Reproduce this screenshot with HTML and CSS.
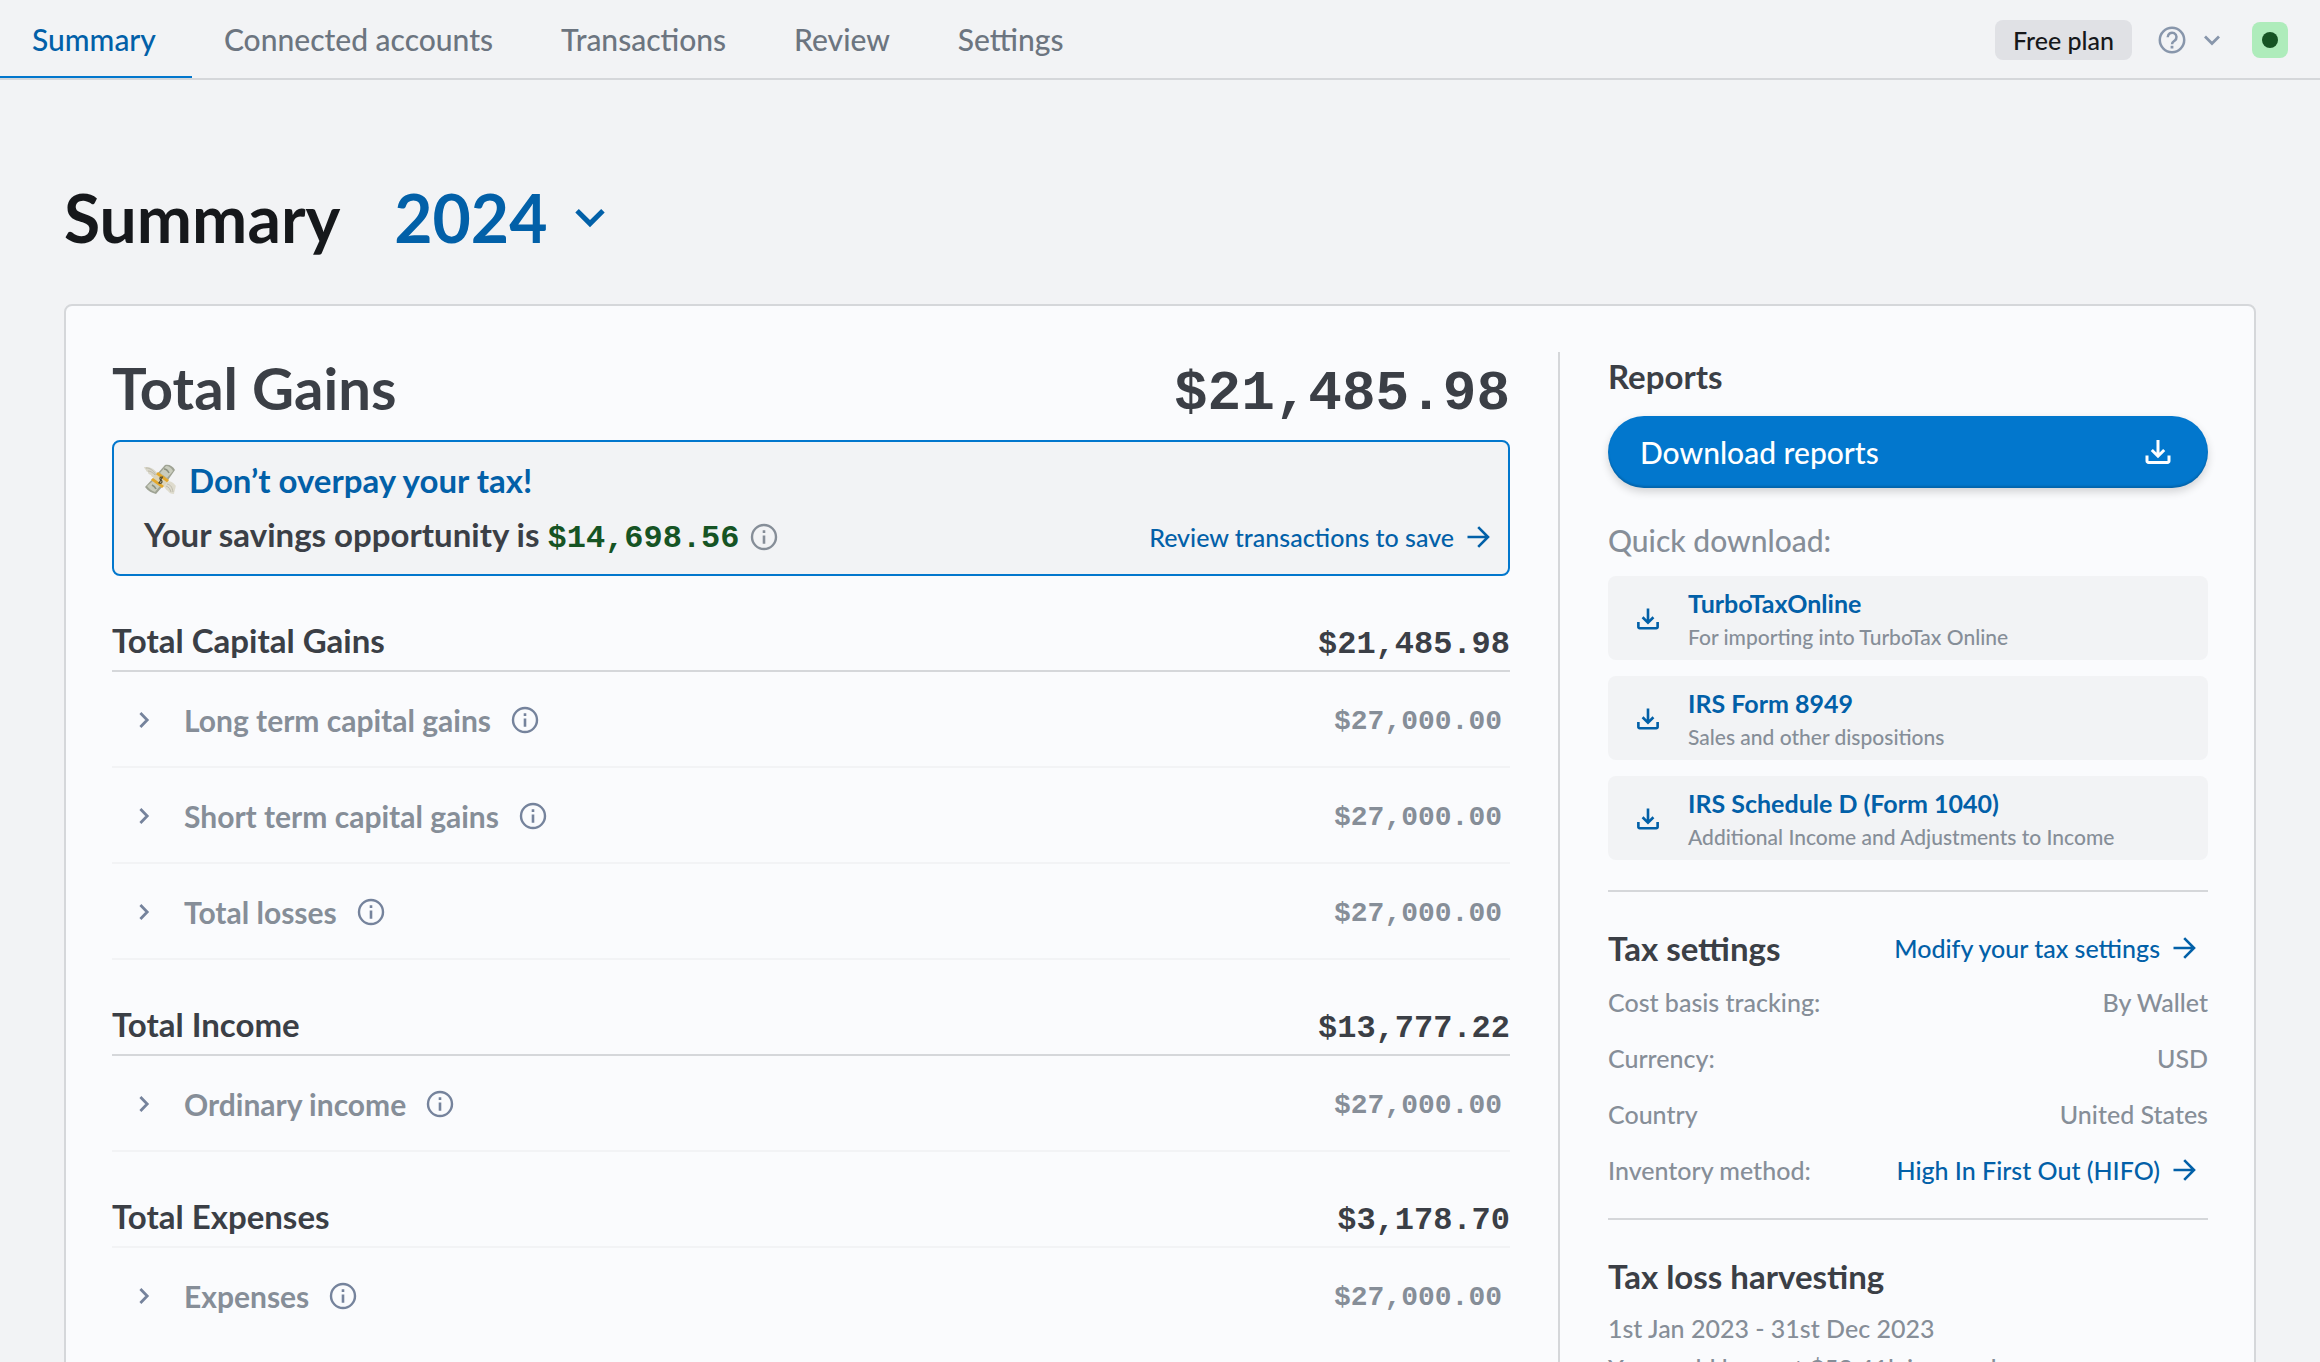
FILE: index.html
```html
<!DOCTYPE html>
<html lang="en">
<head>
<meta charset="utf-8">
<meta name="viewport" content="width=device-width, initial-scale=1">
<title>Summary</title>
<link rel="stylesheet" href="styles.css">
</head>
<body>
<svg class="sprite" aria-hidden="true">
  <symbol id="info" viewBox="0 0 32 32"><circle cx="16" cy="16" r="12" fill="none" stroke="currentColor" stroke-width="2.4"/><path d="M14.7 9.3h2.6v2.7h-2.6zM14.7 14.6h2.6v8.1h-2.6z" fill="currentColor"/></symbol>
  <symbol id="chevron-right" viewBox="0 0 32 32"><path d="M12.4 9l6.8 7-6.8 7" fill="none" stroke="currentColor" stroke-width="2.8"/></symbol>
  <symbol id="arrow" viewBox="0 0 32 32"><path d="M5.5 16h20M16.2 6.2l9.8 9.8-9.8 9.8" fill="none" stroke="currentColor" stroke-width="2.6"/></symbol>
  <symbol id="download" viewBox="0 0 32 32"><path d="M16 4v16M9.800 14l6.200 6.200 6.200-6.200" fill="none" stroke="currentColor" stroke-width="3"/><path d="M5 19.500v5.500a1.500 1.500 0 0 0 1.500 1.500h19a1.500 1.500 0 0 0 1.500-1.500v-5.500" fill="none" stroke="currentColor" stroke-width="3"/></symbol>
</svg>
<div class="app">
  <header class="topbar">
    <nav class="tabs" aria-label="Main">
      <a class="tab tab-active" href="#summary" aria-current="page">Summary</a>
      <a class="tab" href="#accounts">Connected accounts</a>
      <a class="tab" href="#transactions">Transactions</a>
      <a class="tab" href="#review">Review</a>
      <a class="tab" href="#settings">Settings</a>
    </nav>
    <div class="tools">
      <button class="plan" type="button">Free plan</button>
      <button class="help" type="button" aria-label="Help">
        <svg class="icon" viewBox="0 0 32 32"><circle cx="16" cy="16" r="12.2" fill="none" stroke="currentColor" stroke-width="2.5"/><path d="M11.7 13.2a4.4 4.4 0 1 1 6.9 3.5c-1.6 1.1-2.6 1.7-2.6 3.6" fill="none" stroke="currentColor" stroke-width="2.5"/><path d="M14.6 21.8h2.8v2.7h-2.8z" fill="currentColor"/></svg>
        <svg class="icon" viewBox="0 0 32 32"><path d="M9 12.6l7 7 7-7" fill="none" stroke="currentColor" stroke-width="2.8"/></svg>
      </button>
      <button class="status" type="button" aria-label="Account status"><span class="status-dot"></span></button>
    </div>
  </header>

  <main class="page">
    <div class="page-head">
      <h1 class="page-title">Summary</h1>
      <div class="year">
        <select class="year-select" aria-label="Tax year"><option>2024</option><option>2023</option></select>
        <svg class="year-chevron" viewBox="0 0 32 32"><path d="M4.500 9.500L16 21l11.500-11.500" fill="none" stroke="currentColor" stroke-width="4.4"/></svg>
      </div>
    </div>

    <div class="card">
      <div class="gains">
        <div class="gains-head">
          <h2 class="gains-title">Total Gains</h2>
          <span class="money gains-total">$21,485.98</span>
        </div>

        <section class="notice">
          <h3 class="notice-title">
            <svg class="cash" viewBox="0 0 32 32" aria-hidden="true">
              <path d="M14 10C9 3 5 3 0 3c1 2 1 2 2 3 0 1 1 2 2 2 0 2 1 2 3 3 0 2 3 3 5 2z" fill="#d9d6c8"/>
              <path d="M2 4c4 0 7 2 10 7M4 7c3 0 5 2 7 4" fill="none" stroke="#b5b3a5" stroke-width=".8"/>
              <path d="M21 17c6 0 8 1 11 5-1 1 0 2-1 3 0 2-1 3-1 5-3 0-5-1-6-3-2-1-4-4-5-7z" fill="#dedbcd"/>
              <path d="M23 20c4 1 5 3 6 8M22 22c3 1 4 3 5 6" fill="none" stroke="#b5b3a5" stroke-width=".8"/>
              <path d="M14 9L21 1c4-1 8 1 10 5L24 16 12 30C8 29 4 27 1 23z" fill="#9fa394"/>
              <path d="M16 9l6-7c3 0 6 2 7 5l-6 7zM9 17l7 5-5 6c-3-1-6-3-8-6z" fill="#c9ccbd"/>
              <path d="M20 5c2 0 4 2 5 4M8 21c2 1 3 2 4 4" fill="none" stroke="#8b907f" stroke-width="1.600"/>
              <path d="M14 8l11 8-7 8-11-8z" fill="#ddd4b8"/>
              <path d="M14 8l11 8-2 2.200-11-8zM9 14l11 8-2 2-11-8z" fill="#e3a82b"/>
              <path d="M18.500 13.500c-1.500-1-3 0-2.500 1.500s2.500 1 2 3-2.500 1.500-3.500.5M18.800 12.500l-4 7" fill="none" stroke="#4e4a32" stroke-width="1.200"/>
            </svg>
            Don’t overpay your tax!
          </h3>
          <div class="notice-line">
            <p class="notice-text">Your savings opportunity is <span class="money savings">$14,698.56</span></p>
            <button class="info info-soft" type="button" aria-label="About savings"><svg class="icon"><use href="#info"/></svg></button>
            <a class="link notice-link" href="#review">Review transactions to save<svg class="icon"><use href="#arrow"/></svg></a>
          </div>
        </section>

        <section>
          <div class="group-head"><h3 class="heading">Total Capital Gains</h3><span class="money">$21,485.98</span></div>
          <div class="row"><button class="expand" type="button"><svg class="icon"><use href="#chevron-right"/></svg>Long term capital gains</button><button class="info" type="button" aria-label="About long term capital gains"><svg class="icon"><use href="#info"/></svg></button><span class="money row-money">$27,000.00</span></div>
          <div class="row"><button class="expand" type="button"><svg class="icon"><use href="#chevron-right"/></svg>Short term capital gains</button><button class="info" type="button" aria-label="About short term capital gains"><svg class="icon"><use href="#info"/></svg></button><span class="money row-money">$27,000.00</span></div>
          <div class="row"><button class="expand" type="button"><svg class="icon"><use href="#chevron-right"/></svg>Total losses</button><button class="info" type="button" aria-label="About total losses"><svg class="icon"><use href="#info"/></svg></button><span class="money row-money">$27,000.00</span></div>
        </section>
        <section>
          <div class="group-head"><h3 class="heading">Total Income</h3><span class="money">$13,777.22</span></div>
          <div class="row"><button class="expand" type="button"><svg class="icon"><use href="#chevron-right"/></svg>Ordinary income</button><button class="info" type="button" aria-label="About ordinary income"><svg class="icon"><use href="#info"/></svg></button><span class="money row-money">$27,000.00</span></div>
        </section>
        <section>
          <div class="group-head group-head-light"><h3 class="heading">Total Expenses</h3><span class="money">$3,178.70</span></div>
          <div class="row row-last"><button class="expand" type="button"><svg class="icon"><use href="#chevron-right"/></svg>Expenses</button><button class="info" type="button" aria-label="About expenses"><svg class="icon"><use href="#info"/></svg></button><span class="money row-money">$27,000.00</span></div>
        </section>
      </div>

      <aside class="side">
        <section class="side-section">
          <h2 class="heading reports-title">Reports</h2>
          <button class="download-all" type="button">Download reports<svg class="icon"><use href="#download"/></svg></button>
          <h3 class="quick-title">Quick download:</h3>
          <div class="files">
            <a class="file" href="#turbotax"><svg class="file-icon"><use href="#download"/></svg><span class="file-text"><span class="file-name">TurboTaxOnline</span><span class="file-note">For importing into TurboTax Online</span></span></a>
            <a class="file" href="#form-8949"><svg class="file-icon"><use href="#download"/></svg><span class="file-text"><span class="file-name">IRS Form 8949</span><span class="file-note">Sales and other dispositions</span></span></a>
            <a class="file" href="#schedule-d"><svg class="file-icon"><use href="#download"/></svg><span class="file-text"><span class="file-name">IRS Schedule D (Form 1040)</span><span class="file-note">Additional Income and Adjustments to Income</span></span></a>
          </div>
        </section>
        <section class="side-section tax">
          <div class="tax-head"><h2 class="heading">Tax settings</h2><a class="link" href="#settings">Modify your tax settings<svg class="icon"><use href="#arrow"/></svg></a></div>
          <dl class="facts">
            <div class="fact"><dt>Cost basis tracking:</dt><dd>By Wallet</dd></div>
            <div class="fact"><dt>Currency:</dt><dd>USD</dd></div>
            <div class="fact"><dt>Country</dt><dd>United States</dd></div>
            <div class="fact"><dt>Inventory method:</dt><dd><a class="link" href="#inventory">High In First Out (HIFO)<svg class="icon"><use href="#arrow"/></svg></a></dd></div>
          </dl>
        </section>
        <section class="harvest">
          <h2 class="heading">Tax loss harvesting</h2>
          <p class="harvest-text">1st Jan 2023 - 31st Dec 2023<br>You could harvest $58.41k in saved</p>
        </section>
      </aside>
    </div>
  </main>
</div>
</body>
</html>
```
FILE: styles.css
```css
:root {
  --blue: #0277cd;
  --link: #0260a8;
  --ink: #3b3f46;
  --muted: #868e98;
  --slate: #75839c;
  --line: #d5d7da;
  --soft: #f2f3f5;
}

* { box-sizing: border-box; }

body {
  margin: 0;
  background: var(--soft);
  color: var(--ink);
  font: 500 25px/32px Lato, sans-serif;
}

h1, h2, h3, p, dl, dd { margin: 0; }

button, select {
  margin: 0;
  padding: 0;
  border: 0;
  background: none;
  color: inherit;
  font: inherit;
}

a { text-decoration: none; }

.sprite { display: none; }
.icon { display: block; flex: none; width: 32px; height: 32px; }

.app { display: flex; flex-direction: column; height: 100vh; }

/* Top bar */
.topbar {
  display: flex;
  flex: none;
  justify-content: space-between;
  height: 80px;
  border-bottom: 2px solid var(--line);
}
.tabs { display: flex; }
.tab {
  display: flex;
  align-items: center;
  padding: 2px 36px 0 32px;
  border-bottom: 2px solid transparent;
  color: #6c7580;
  font-size: 30px;
}
.tab-active { border-color: var(--blue); color: var(--link); }
.tools { display: flex; align-items: center; gap: 24px; padding: 2px 32px 0 0; }
.plan {
  height: 40px;
  padding: 0 18px;
  border-radius: 8px;
  background: #e0e1e5;
  color: #16181b;
}
.help { display: flex; gap: 8px; color: #8896ab; }
.status {
  display: grid;
  place-items: center;
  width: 36px;
  height: 36px;
  border-radius: 8px;
  background: #aeecbb;
}
.status-dot { width: 16px; height: 16px; border-radius: 50%; background: #165424; }

/* Page */
.page { flex: 1; min-height: 0; padding: 98px 64px 0; overflow-y: auto; scrollbar-width: none; }
.page-head { display: flex; gap: 54px; margin-bottom: 46px; }
.page-title { color: #16181b; font-size: 66px; font-weight: 700; line-height: 80px; }
.year { display: grid; align-items: center; color: var(--link); }
.year-select {
  grid-area: 1 / 1;
  height: 80px;
  padding-right: 60px;
  appearance: none;
  font-size: 66px;
  font-weight: 700;
  line-height: 80px;
}
.year-chevron { grid-area: 1 / 1; justify-self: end; width: 36px; height: 36px; pointer-events: none; }

.card {
  display: grid;
  grid-template-columns: minmax(0, 1fr) 650px;
  gap: 48px;
  padding: 46px;
  border: 2px solid var(--line);
  border-radius: 8px;
  background: #fafbfd;
}

.heading { font-size: 33px; font-weight: 700; line-height: 40px; }
.money { font-family: "Liberation Mono", monospace; font-size: 32px; font-weight: 700; line-height: 40px; }
.link { display: inline-flex; align-items: center; gap: 8px; color: var(--link); }

/* Gains column */
.gains-head { display: flex; justify-content: space-between; height: 88px; }
.gains-title { font-size: 58px; font-weight: 700; line-height: 72px; }
.gains-total { font-size: 56px; line-height: 84px; }

.notice {
  height: 136px;
  padding: 18px 14px 0 30px;
  border: 2px solid var(--blue);
  border-radius: 8px;
  background: var(--soft);
}
.notice-title {
  display: flex;
  align-items: center;
  gap: 13px;
  margin-bottom: 14px;
  color: var(--link);
  font-size: 33px;
  font-weight: 700;
  line-height: 40px;
}
.cash { width: 32px; height: 32px; }
.notice-line { display: flex; align-items: center; gap: 8px; }
.notice-text { font-size: 33px; font-weight: 700; line-height: 40px; }
.savings { color: #165424; }
.notice-link { margin-left: auto; }

.info { color: var(--slate); }
.info-soft { color: var(--muted); }

.group-head {
  display: flex;
  align-items: baseline;
  justify-content: space-between;
  height: 96px;
  padding-top: 44px;
  border-bottom: 2px solid var(--line);
}
.group-head-light { border-color: var(--soft); }
.row {
  display: flex;
  align-items: center;
  gap: 18px;
  height: 96px;
  padding: 2px 8px 0 16px;
  border-bottom: 2px solid var(--soft);
}
.row-last { border-color: transparent; }
.expand { display: flex; align-items: center; gap: 24px; color: var(--muted); font-size: 30px; font-weight: 700; }
.expand .icon { color: var(--slate); }
.row-money { margin-left: auto; padding-top: 4px; color: var(--muted); font-size: 28px; }

/* Sidebar */
.side { padding-left: 48px; border-left: 2px solid var(--line); }
.side-section { border-bottom: 2px solid var(--line); padding-bottom: 30px; }
.reports-title { padding-top: 4px; margin-bottom: 20px; }
.download-all {
  display: flex;
  align-items: center;
  justify-content: space-between;
  width: 100%;
  height: 72px;
  padding: 0 34px 0 32px;
  border-radius: 36px;
  background: var(--blue);
  box-shadow: 0 4px 8px rgba(0, 0, 0, .16), inset 0 -2px 2px rgba(0, 0, 0, .16);
  color: #fff;
  font-size: 30px;
}
.quick-title { margin: 32px 0 16px; color: var(--muted); font-size: 30px; font-weight: 500; line-height: 40px; }
.files { display: grid; gap: 16px; }
.file {
  display: flex;
  align-items: center;
  gap: 26px;
  height: 84px;
  padding: 2px 26px 0;
  border-radius: 8px;
  background: var(--soft);
}
.file-icon { flex: none; width: 28px; height: 28px; }
.file { color: var(--link); }
.file-text { display: grid; }
.file-name { font-weight: 700; line-height: 36px; }
.file-note { color: var(--muted); font-size: 21px; line-height: 32px; }

.tax { padding: 36px 0 20px; }
.tax-head { display: flex; justify-content: space-between; align-items: center; padding-right: 8px; }
.facts { margin-top: 6px; color: var(--muted); }
.fact { display: flex; align-items: center; justify-content: space-between; height: 56px; }
.fact .link { padding-right: 8px; }
.harvest { padding-top: 36px; }
.harvest-text { margin-top: 12px; color: var(--muted); line-height: 40px; }
```
